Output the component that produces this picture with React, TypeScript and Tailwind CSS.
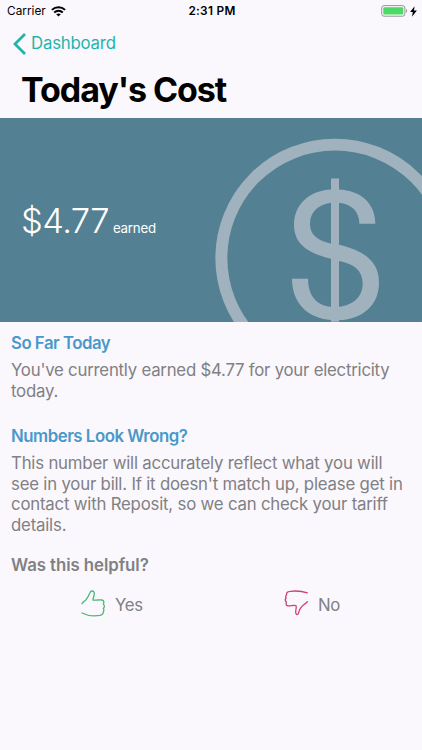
import React from "react";

function StatusBar() {
  return (
    <header className="grid h-[22px] grid-cols-3 items-center pl-[7px] pr-[5px] text-[11.8px] leading-[22px] text-black">
      <div className="flex items-center gap-[5px]">
        <span className="tracking-[0.02px]">Carrier</span>
        <svg width="15" height="11" viewBox="0 0 15 11" fill="none" stroke="currentColor" strokeWidth="2">
          <path d="M.9 3.9C4.6.3 10.4.3 14.1 3.9M3.2 6.5c2.5-2.2 6.1-2.2 8.6 0" />
          <path d="M5.2 8.3c1.3-1.1 3.3-1.1 4.6 0L7.5 10.6z" fill="currentColor" stroke="none" />
        </svg>
      </div>
      <span className="text-center font-semibold tracking-[0.3px]">2:31 PM</span>
      <div className="flex items-center justify-end gap-[2px]">
        <svg width="27" height="12" viewBox="0 0 27 12">
          <rect x=".7" y=".6" width="23.2" height="10.6" rx="2.4" fill="none" stroke="#96949a" />
          <rect x="2.3" y="2.2" width="20" height="7.4" rx="1" fill="#4cd964" />
          <path d="M25 4c1.5.5 1.5 3.3 0 3.8z" fill="#96949a" />
        </svg>
        <svg width="7" height="11" viewBox="0 0 7 11">
          <path d="M4.6.2.1 6h2.7l-.8 4.7L6.9 4.5H4z" fill="#000" />
        </svg>
      </div>
    </header>
  );
}

function DollarEmblem() {
  return (
    <svg className="h-full w-[222px] shrink-0" viewBox="0 24 666 612" preserveAspectRatio="none" fill="none">
      <circle cx="405" cy="445" r="341" stroke="#9fb2bd" strokeWidth="36" />
      <path
        fill="#9fb2bd"
        d="M393 206H417V239C482 242 526 280 526 342H478C478 307 456 283 417 279V405C496 424 537 456 537 519C537 585 490 628 417 632V636H393V631C321 625 276 579 276 507H324C325 559 350 588 393 591V447C322 430 282 402 282 345C282 284 328 242 393 239ZM393 279C353 284 330 309 330 342C330 375 351 392 393 402ZM417 454V591C460 587 488 560 488 522C488 483 463 463 417 454Z"
      />
    </svg>
  );
}

function ThumbUp() {
  return (
    <svg width="24" height="29" viewBox="0 0 24 29" fill="none" stroke="#4fb777" strokeWidth="1.3" strokeLinecap="round" strokeLinejoin="round">
      <path d="M1 14.7C2.2 12.9 3.8 12.1 5.3 10.3C7 8.4 8 6 9 3.7C9.7 1.6 12.6 1.2 13.3 3.8C13.7 5.8 11.9 8.7 12 11C14.8 11.7 18.3 10.3 21 11C23.2 11.6 23.2 13.3 22.3 15C23.9 16.4 23.5 18.5 22.3 19.4C23.4 21 22.7 22 22.4 22.7C22.4 24.9 21.4 25.8 18.8 26.3C12.5 27.3 6.2 26.7 1 24" />
    </svg>
  );
}

function ThumbDown() {
  return (
    <svg width="24" height="29" viewBox="0 0 24 29" fill="none" stroke="#d23f73" strokeWidth="1.3" strokeLinecap="round" strokeLinejoin="round">
      <path d="M23.3 3.8C17.8 2 11.6 1.7 6.2 2.3C3.5 2.5 2.4 3.6 2.6 5.7C1.5 6.7 1.6 8 2.1 9C.9 10.5 1.1 12 2.4 13.1C1.6 15.7 2.3 16.8 4.5 16.9C7.2 17 9.6 15.9 12 16.7C12.9 18.9 11.2 21.5 11.8 23.9C12.2 26.2 13.8 26.2 14.5 24.1C15.1 21.9 15.6 20 16.8 18.8C18.7 16.4 21.3 14.9 23.3 12.7" />
    </svg>
  );
}

export default function App() {
  return (
    <main className="flex h-[750px] w-[422px] flex-col overflow-hidden bg-[#faf8fc] font-['Inter',sans-serif]">
      <StatusBar />
      <nav className="flex h-[43px] items-center gap-[5px] pl-[13px] text-[#1fb5ad]">
        <svg width="13" height="22" viewBox="0 0 13 22" fill="none" stroke="currentColor" strokeWidth="2.8">
          <path d="M12 1 2 11l10 10" />
        </svg>
        <span className="text-[16.8px] tracking-[-0.2px]">Dashboard</span>
      </nav>
      <h1 className="h-[53.3px] pl-[21px] text-[34px] font-bold leading-[50px] tracking-[-1.05px] text-black">Today's Cost</h1>
      <section className="flex h-[203.7px] shrink-0 items-center bg-[#548094] text-white">
        <div className="flex w-[200px] shrink-0 items-baseline gap-[4px] pl-[21px] pt-[2px]">
          <span className="text-[34.5px] font-[350] leading-[40px] tracking-[-0.6px]">$4.77</span>
          <span className="text-[13.3px] tracking-[-0.2px]">earned</span>
        </div>
        <DollarEmblem />
      </section>
      <section className="px-[11px] pt-[10px] text-[16.8px] leading-[20.6px] text-[#818084]">
        <h2 className="h-[28px] font-semibold leading-[22px] tracking-[-0.5px] text-[#4a98c9]">So Far Today</h2>
        <p className="h-[65px] whitespace-nowrap tracking-[-0.23px]">
          You've currently earned $4.77 for your electricity<br />today.
        </p>
        <h2 className="h-[28px] font-semibold leading-[22px] tracking-[-0.47px] text-[#4a98c9]">Numbers Look Wrong?</h2>
        <p className="whitespace-nowrap tracking-[-0.2px]">
          This number will accurately reflect what you will<br />
          see in your bill. If it doesn't match up, please get in<br />
          contact with Reposit, so we can check your tariff<br />
          details.
        </p>
        <h3 className="mt-[20px] font-semibold tracking-[-0.06px]">Was this helpful?</h3>
        <div className="mt-[13px] flex items-start">
          <button className="ml-[70px] flex h-[32px] w-[203px] items-center gap-[10px]">
            <span className="self-start"><ThumbUp /></span>
            <span className="tracking-[-0.3px]">Yes</span>
          </button>
          <button className="flex h-[32px] items-center gap-[10px]">
            <span className="self-start"><ThumbDown /></span>
            <span className="tracking-[-0.3px]">No</span>
          </button>
        </div>
      </section>
    </main>
  );
}
